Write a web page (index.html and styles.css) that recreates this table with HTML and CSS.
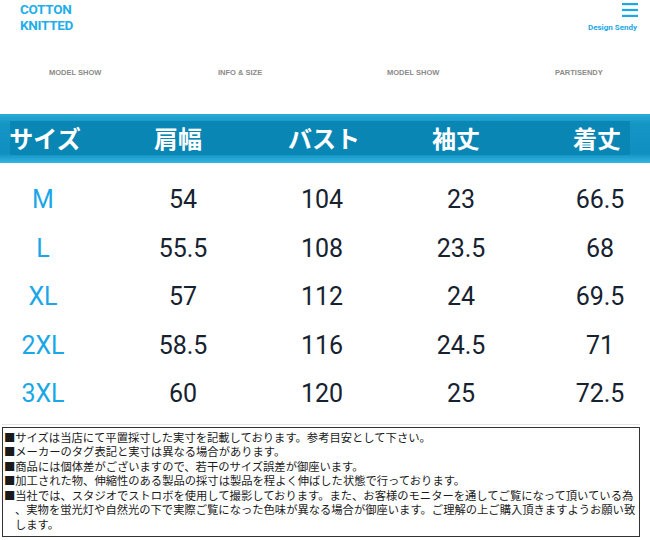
FILE: index.html
```html
<!DOCTYPE html>
<html lang="ja">
<head>
<meta charset="utf-8">
<link rel="stylesheet" href="styles.css">
</head>
<body>
<header class="top">
  <div class="logo">COTTON<br>KNITTED</div>
  <div class="brand">
    <svg class="burger" width="16" height="14" viewBox="0 0 16 14"><rect x="0" y="0" width="16" height="2.2" fill="#1aa8e6"/><rect x="0" y="5.9" width="16" height="2.2" fill="#1aa8e6"/><rect x="0" y="11.8" width="16" height="2.2" fill="#1aa8e6"/></svg>
    <div class="brand-name">Design Sendy</div>
  </div>
</header>
<nav class="nav">
  <span>MODEL SHOW</span>
  <span>INFO &amp; SIZE</span>
  <span>MODEL SHOW</span>
  <span>PARTISENDY</span>
</nav>
<section class="band">
  <div class="head">
    <span class="h1">サイズ</span><span class="h2">肩幅</span><span class="h3">バスト</span><span class="h4">袖丈</span><span class="h5">着丈</span>
  </div>
</section>
<section class="rows">
  <div class="row"><span class="size">M</span><span>54</span><span>104</span><span>23</span><span>66.5</span></div>
  <div class="row"><span class="size">L</span><span>55.5</span><span>108</span><span>23.5</span><span>68</span></div>
  <div class="row"><span class="size">XL</span><span>57</span><span>112</span><span>24</span><span>69.5</span></div>
  <div class="row"><span class="size">2XL</span><span>58.5</span><span>116</span><span>24.5</span><span>71</span></div>
  <div class="row"><span class="size">3XL</span><span>60</span><span>120</span><span>25</span><span>72.5</span></div>
</section>
<div class="rule"></div>
<div class="notes">■サイズは当店にて平置採寸した実寸を記載しております。参考目安として下さい。<br>■メーカーのタグ表記と実寸は異なる場合があります。<br>■商品には個体差がございますので、若干のサイズ誤差が御座います。<br>■加工された物、伸縮性のある製品の採寸は製品を程よく伸ばした状態で行っております。<br>■当社では、スタジオでストロボを使用して撮影しております。また、お客様のモニターを通してご覧になって頂いている為<br><span class="indent">、実物を蛍光灯や自然光の下で実際ご覧になった色味が異なる場合が御座います。ご理解の上ご購入頂きますようお願い致</span><br><span class="indent">します。</span></div>
</body>
</html>
```

FILE: styles.css
```css
* { box-sizing: border-box; }
html, body { margin: 0; padding: 0; background: #fff; }
body { width: 650px; font-family: Roboto, "Noto Sans CJK JP", sans-serif; }

.top {
  height: 40px;
  display: flex;
  justify-content: space-between;
  align-items: flex-start;
  padding: 0 13px 0 20px;
}
.logo {
  padding-top: 1px;
  font-family: Roboto, sans-serif;
  font-weight: 700;
  font-size: 13.5px;
  line-height: 16px;
  color: #1faeea;
  letter-spacing: -0.3px;
}
.brand {
  padding-top: 3px;
  display: flex;
  flex-direction: column;
  align-items: flex-end;
}
.burger { display: block; margin-right: -1px; }
.brand-name {
  margin-top: 6px;
  font-family: Roboto, sans-serif;
  font-weight: 700;
  font-size: 8px;
  line-height: 10px;
  color: #1aa8e6;
}

.nav {
  margin-top: 28px;
  height: 10px;
  display: grid;
  grid-template-columns: 169px 169px 168px 1fr;
  padding-left: 49px;
  font-family: "Liberation Sans", Arial, sans-serif;
  font-weight: 700;
  font-size: 7.5px;
  line-height: 10px;
  color: #8a8a8a;
  white-space: nowrap;
}

.band {
  margin-top: 36px;
  height: 49px;
  padding-top: 7px;
  background:
    linear-gradient(#0a86b4, #0a86b4) 10px 7px / 620px 34px no-repeat,
    linear-gradient(#2aabd8 0%, #1496c5 20%, #0f8fbf 80%, #35b5e2 100%);
}

.head {
  height: 34px;
  display: grid;
  grid-template-columns: 90px 176px 116px 148px 120px;
  justify-items: center;
  align-items: center;
  font-family: "Noto Sans CJK JP", sans-serif;
  font-weight: 700;
  font-size: 24px;
  line-height: 34px;
  color: #fff;
  white-space: nowrap;
}
.head .h5 { padding-left: 14px; }

.rows { padding-top: 13px; }
.row {
  height: 48.5px;
  display: grid;
  grid-template-columns: 86px repeat(4, 84px);
  column-gap: 55px;
  justify-items: center;
  align-items: center;
  font-family: Roboto, sans-serif;
  font-size: 25px;
  line-height: 48.5px;
  color: #16222f;
  white-space: nowrap;
}
.row .size { color: #1ba6e8; }

.rule {
  margin: 5px 10px 0 2px;
  height: 1px;
  background: #e6e6e6;
}

.notes {
  margin: 2px 0 0 2px;
  width: 638px;
  border: 1px solid #333;
  padding: 2px 0 5px 1px;
  font-family: "Noto Sans CJK JP", sans-serif;
  font-size: 11.3px;
  line-height: 14.5px;
  color: #1a1a1a;
  white-space: nowrap;
  background: #fff;
}
.notes .indent { padding-left: 11px; }
```
